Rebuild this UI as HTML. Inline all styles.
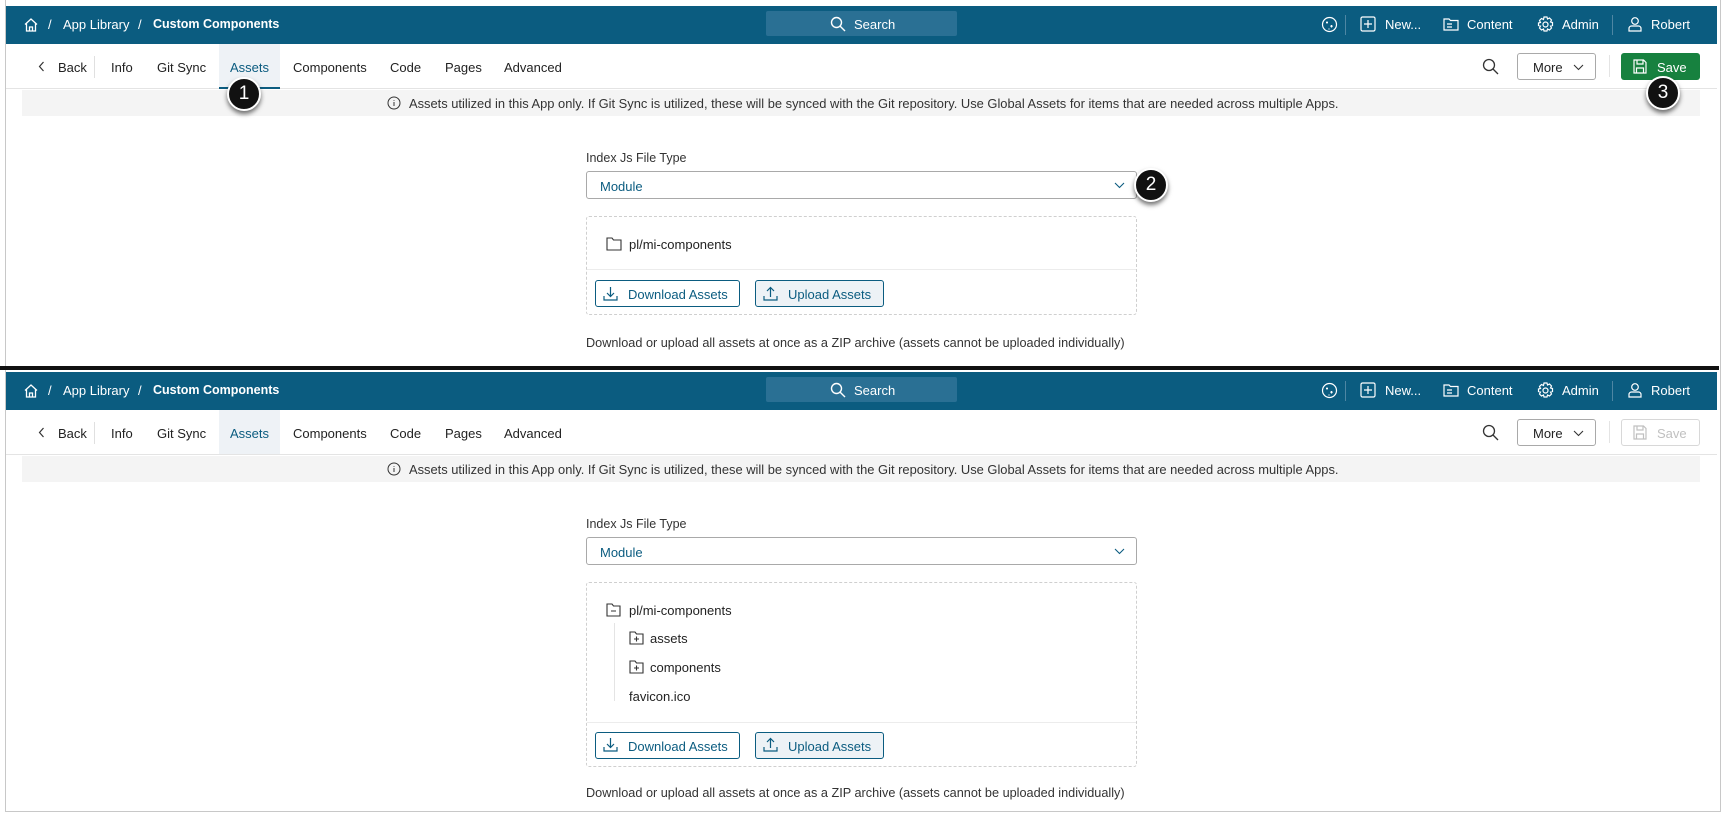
<!DOCTYPE html>
<html><head><meta charset="utf-8"><style>
*{box-sizing:border-box;margin:0;padding:0}
body{width:1723px;height:813px;background:#fff;font-family:"Liberation Sans",sans-serif;font-size:13px;color:#222;position:relative;overflow:hidden}
.frame{position:absolute;left:5px;top:0;width:1716px;height:812px;border:1px solid #c8c8c8;border-top:none}
.p{position:absolute;left:0;width:1723px;height:366px}
.hdr{position:absolute;left:6px;top:6px;width:1711px;height:38px;background:#0b5c80;color:#fff}
.hdr span,.hdr svg{position:absolute}
.tabs{position:absolute;left:6px;top:44px;width:1711px;height:45px;border-bottom:1px solid #e4e4e4}
.tabs span{position:absolute;top:16px;color:#222}
.banner{position:absolute;left:22px;top:90px;width:1678px;height:26px;background:#f4f4f4;font-size:12.9px;color:#333}
.lbl{position:absolute;left:586px;font-size:12.5px;color:#333}
.sel{position:absolute;left:586px;width:551px;height:28px;border:1px solid #a9a9a9;border-radius:3px;color:#0b5c80;padding:7px 13px}
.box{position:absolute;left:586px;width:551px;border:1px dashed #cfcfcf;border-radius:3px}
.btn{position:absolute;height:27px;border:1px solid #0b5c80;border-radius:3px;color:#0b5c80;font-size:13px;padding:6px 0 0 32px}
.help{position:absolute;left:586px;font-size:12.7px;color:#333}
.circ{position:absolute;width:34px;height:34px;border-radius:50%;background:#111;border:2px solid #fff;box-shadow:0 3px 5px rgba(0,0,0,.55);color:#fff;font-size:19px;text-align:center;line-height:30px}
.chev{position:absolute}
</style></head><body>
<div class="frame"></div>

<div class="p" style="top:0">
 <div class="hdr">
  <svg style="left:17px;top:11px" width="16" height="16" viewBox="0 0 16 16" fill="none" stroke="#fff" stroke-width="1.3"><path d="M2 7.5L8 2l6 5.5M3.5 6.5V14h9V6.5M6.5 14V10h3v4"/></svg>
  <span style="left:42px;top:11px">/</span>
  <span style="left:57px;top:11px">App Library</span>
  <span style="left:132px;top:11px">/</span>
  <span style="left:147px;top:11px;font-weight:bold;font-size:12.5px">Custom Components</span>
  <div style="position:absolute;left:760px;top:5px;width:191px;height:25px;background:#2a7094;border-radius:2px"></div>
  <svg style="left:824px;top:10px" width="16" height="16" viewBox="0 0 16 16" fill="none" stroke="#fff" stroke-width="1.4"><circle cx="6.5" cy="6.5" r="5"/><path d="M10.2 10.2L15 15"/></svg>
  <span style="left:848px;top:11px">Search</span>
  <svg style="left:1315px;top:10px" width="17" height="17" viewBox="0 0 17 17" fill="none" stroke="#fff" stroke-width="1.2"><circle cx="8.5" cy="8.5" r="7"/><path d="M6 5.5v2M5 6.5h2M10.5 9v2.5M9.3 10.2h2.4M8 12.5v1"/></svg>
  <div style="position:absolute;left:1339px;top:9px;width:1px;height:20px;background:#4e86a3"></div>
  <svg style="left:1354px;top:10px" width="16" height="16" viewBox="0 0 16 16" fill="none" stroke="#fff" stroke-width="1.2"><rect x="1" y="1" width="14" height="14" rx="1.5"/><path d="M8 4v8M4 8h8"/></svg>
  <span style="left:1379px;top:11px">New...</span>
  <svg style="left:1437px;top:10px" width="16" height="16" viewBox="0 0 16 16" fill="none" stroke="#fff" stroke-width="1.2"><path d="M1 3h5l1.5 1.5H15V14H1zM4 8h5M4 11h5"/></svg>
  <span style="left:1461px;top:11px">Content</span>
  <svg style="left:1531px;top:10px" width="17" height="17" viewBox="0 0 17 17" fill="none" stroke="#fff" stroke-width="1.2"><circle cx="8.5" cy="8.5" r="2.5"/><path d="M7 1h3l.5 2 2-1 2 2-1 2 2 .5v3l-2 .5 1 2-2 2-2-1-.5 2H7l-.5-2-2 1-2-2 1-2-2-.5V7l2-.5-1-2 2-2 2 1z"/></svg>
  <span style="left:1556px;top:11px">Admin</span>
  <div style="position:absolute;left:1606px;top:9px;width:1px;height:20px;background:#4e86a3"></div>
  <svg style="left:1621px;top:10px" width="16" height="16" viewBox="0 0 16 16" fill="none" stroke="#fff" stroke-width="1.2"><circle cx="8" cy="5" r="3.3"/><path d="M2 15v-2.5c0-1.5 1.2-2.5 2.5-2.5h7c1.3 0 2.5 1 2.5 2.5V15z"/></svg>
  <span style="left:1645px;top:11px">Robert</span>
 </div>
 <div class="tabs">
  <svg class="chev" style="left:32px;top:17px" width="7" height="11" viewBox="0 0 7 11" fill="none" stroke="#333" stroke-width="1.2"><path d="M5.5 1L1.5 5.5 5.5 10"/></svg>
  <span style="left:52px">Back</span>
  <div style="position:absolute;left:88px;top:12px;width:1px;height:22px;background:#e0e0e0"></div>
  <span style="left:105px">Info</span>
  <span style="left:151px">Git Sync</span>
  <div class="atab" style="position:absolute;left:213px;top:0;width:61px;height:45px;background:#eef2f6;border-bottom:2px solid #0b5c80"></div>
  <span style="left:224px;color:#0b5c80">Assets</span>
  <span style="left:287px">Components</span>
  <span style="left:384px">Code</span>
  <span style="left:439px">Pages</span>
  <span style="left:498px">Advanced</span>
  <svg style="position:absolute;left:1476px;top:14px" width="17" height="17" viewBox="0 0 17 17" fill="none" stroke="#333" stroke-width="1.3"><circle cx="7" cy="7" r="5.5"/><path d="M11 11l5 5"/></svg>
  <div style="position:absolute;left:1511px;top:9px;width:79px;height:27px;border:1px solid #a9a9a9;border-radius:3px"><span style="left:15px;top:6px">More</span>
   <svg class="chev" style="left:55px;top:10px" width="11" height="7" viewBox="0 0 11 7" fill="none" stroke="#333" stroke-width="1.1"><path d="M1 1l4.5 4.5L10 1"/></svg></div>
  <div style="position:absolute;left:1603px;top:11px;width:1px;height:22px;background:#e4e4e4"></div>
 </div>
 <div class="banner">
  <svg style="position:absolute;left:365px;top:6px" width="14" height="14" viewBox="0 0 14 14" fill="none" stroke="#333" stroke-width="1"><circle cx="7" cy="7" r="6"/><path d="M7 6v4M7 4v.8"/></svg>
  <span style="position:absolute;left:387px;top:6px">Assets utilized in this App only. If Git Sync is utilized, these will be synced with the Git repository. Use Global Assets for items that are needed across multiple Apps.</span>
 </div>
</div>

<div class="p" style="top:366px" id="p2"></div>

<div style="position:absolute;left:1621px;top:53px;width:79px;height:27px;background:#17813f;border-radius:3px;color:#fff">
 <svg style="position:absolute;left:12px;top:6px" width="14" height="15" viewBox="0 0 14 15" fill="none" stroke="#fff" stroke-width="1.2"><path d="M1 1h9.5L13 3.5V14H1zM4 1v4h6V1M3.5 14V9h7v5"/></svg>
 <span style="position:absolute;left:36px;top:7px">Save</span></div>
<div style="position:absolute;left:1621px;top:419px;width:79px;height:27px;border:1px solid #d8d8d8;border-radius:3px;color:#c0c0c0">
 <svg style="position:absolute;left:11px;top:5px" width="14" height="15" viewBox="0 0 14 15" fill="none" stroke="#c0c0c0" stroke-width="1.2"><path d="M1 1h9.5L13 3.5V14H1zM4 1v4h6V1M3.5 14V9h7v5"/></svg>
 <span style="position:absolute;left:35px;top:6px">Save</span></div>

<div class="lbl" style="top:151px">Index Js File Type</div>
<div class="sel" style="top:171px">Module<svg class="chev" style="right:11px;top:10px" width="11" height="7" viewBox="0 0 11 7" fill="none" stroke="#0b5c80" stroke-width="1.1"><path d="M1 1l4.5 4.5L10 1"/></svg></div>
<div class="box" style="top:216px;height:99px">
 <svg style="position:absolute;left:19px;top:20px" width="16" height="14" viewBox="0 0 16 14" fill="none" stroke="#333" stroke-width="1.1"><path d="M1 1h5l1.5 2H15v10H1z"/></svg>
 <span style="position:absolute;left:42px;top:20px">pl/mi-components</span>
 <div style="position:absolute;left:0;top:52px;width:549px;height:1px;background:#ececec"></div>
 <div class="btn" style="left:8px;top:63px;width:145px">Download Assets</div>
 <div class="btn" style="left:168px;top:63px;width:129px;background:#edf2f6">Upload Assets</div>
</div>
<div class="help" style="top:336px">Download or upload all assets at once as a ZIP archive (assets cannot be uploaded individually)</div>

<div style="position:absolute;left:0;top:366px;width:1719px;height:4px;background:#111"></div>

<div class="lbl" style="top:517px">Index Js File Type</div>
<div class="sel" style="top:537px">Module<svg class="chev" style="right:11px;top:10px" width="11" height="7" viewBox="0 0 11 7" fill="none" stroke="#0b5c80" stroke-width="1.1"><path d="M1 1l4.5 4.5L10 1"/></svg></div>
<div class="box" style="top:582px;height:185px">
 <svg style="position:absolute;left:19px;top:20px" width="15" height="14" viewBox="0 0 15 14" fill="none" stroke="#333" stroke-width="1.1"><path d="M1 1h5l1.5 2H14v10H1zM5 8h5"/></svg>
 <span style="position:absolute;left:42px;top:20px">pl/mi-components</span>
 <div style="position:absolute;left:27px;top:40px;width:1px;height:78px;background:#e4e4e4"></div>
 <svg style="position:absolute;left:42px;top:48px" width="15" height="14" viewBox="0 0 15 14" fill="none" stroke="#333" stroke-width="1.1"><path d="M1 1h5l1.5 2H14v10H1zM5 8h5M7.5 5.5v5"/></svg>
 <span style="position:absolute;left:63px;top:48px">assets</span>
 <svg style="position:absolute;left:42px;top:77px" width="15" height="14" viewBox="0 0 15 14" fill="none" stroke="#333" stroke-width="1.1"><path d="M1 1h5l1.5 2H14v10H1zM5 8h5M7.5 5.5v5"/></svg>
 <span style="position:absolute;left:63px;top:77px">components</span>
 <span style="position:absolute;left:42px;top:106px">favicon.ico</span>
 <div style="position:absolute;left:0;top:139px;width:549px;height:1px;background:#ececec"></div>
 <div class="btn" style="left:8px;top:149px;width:145px">Download Assets</div>
 <div class="btn" style="left:168px;top:149px;width:129px;background:#edf2f6">Upload Assets</div>
</div>
<div class="help" style="top:786px">Download or upload all assets at once as a ZIP archive (assets cannot be uploaded individually)</div>

<svg style="position:absolute;left:603px;top:286px" width="15" height="15" viewBox="0 0 15 15" fill="none" stroke="#0b5c80" stroke-width="1.2"><path d="M7.5 1v9M4 7l3.5 3.5L11 7M1 10v4h13v-4"/></svg>
<svg style="position:absolute;left:763px;top:286px" width="15" height="15" viewBox="0 0 15 15" fill="none" stroke="#0b5c80" stroke-width="1.2"><path d="M7.5 11V2M4 5l3.5-3.5L11 5M1 10v4h13v-4"/></svg>
<svg style="position:absolute;left:603px;top:737px" width="15" height="15" viewBox="0 0 15 15" fill="none" stroke="#0b5c80" stroke-width="1.2"><path d="M7.5 1v9M4 7l3.5 3.5L11 7M1 10v4h13v-4"/></svg>
<svg style="position:absolute;left:763px;top:737px" width="15" height="15" viewBox="0 0 15 15" fill="none" stroke="#0b5c80" stroke-width="1.2"><path d="M7.5 11V2M4 5l3.5-3.5L11 5M1 10v4h13v-4"/></svg>

<div class="circ" style="left:227px;top:77px">1</div>
<div class="circ" style="left:1134px;top:168px">2</div>
<div class="circ" style="left:1646px;top:76px">3</div>

<script>
var p1=document.querySelector('.p');var p2=document.getElementById('p2');p2.innerHTML=p1.innerHTML;
var t=p2.querySelector('.atab');t.style.borderBottom='1px solid #e4e4e4';
</script>
</body></html>
